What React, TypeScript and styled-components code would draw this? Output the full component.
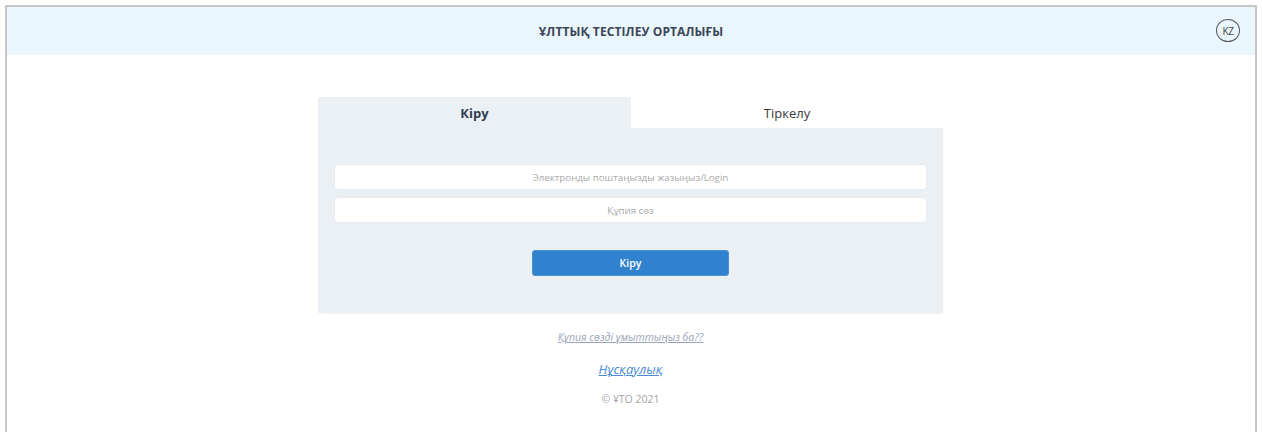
import React, { useState } from "react";
import styled, { createGlobalStyle } from "styled-components";

const GlobalStyle = createGlobalStyle`
  html, body {
    margin: 0;
    padding: 0;
    background: #ffffff;
    font-family: "Open Sans", "Noto Sans", sans-serif;
  }
  * {
    box-sizing: border-box;
  }
`;

const tabs = [
  { key: "login", label: "Кіру" },
  { key: "register", label: "Тіркелу" },
];

const App = () => {
  const [active, setActive] = useState<string>("login");

  return (
    <>
      <GlobalStyle />
      <Frame>
        <Header>
          <Title>ҰЛТТЫҚ ТЕСТІЛЕУ ОРТАЛЫҒЫ</Title>
          <LangBadge>KZ</LangBadge>
        </Header>

        <Main>
          <Card>
            <Tabs>
              {tabs.map((t) => (
                <Tab
                  key={t.key}
                  $active={active === t.key}
                  onClick={() => setActive(t.key)}
                >
                  {t.label}
                </Tab>
              ))}
            </Tabs>
            <Body>
              <Fields>
                <Input placeholder="Электронды поштаңызды жазыңыз/Login" />
                <Input type="password" placeholder="Құпия сөз" />
              </Fields>
              <SubmitButton>Кіру</SubmitButton>
            </Body>
          </Card>

          <Forgot href="#">Құпия сөзді ұмыттыңыз ба??</Forgot>
          <Guide href="#">Нұсқаулық</Guide>
          <Copy>© ҰТО 2021</Copy>
        </Main>
      </Frame>
    </>
  );
};

export default App;

const Frame = styled.div`
  margin: 5px 5px 0 5px;
  height: 427px;
  border: 2px solid #c6c6c6;
  border-bottom: none;
  display: flex;
  flex-direction: column;
`;

const Header = styled.header`
  position: relative;
  height: 48px;
  background: #eaf6fe;
  display: flex;
  align-items: center;
  justify-content: center;
`;

const Title = styled.h1`
  margin: 0;
  font-size: 12px;
  font-weight: 700;
  color: #3a4557;
  letter-spacing: 0.1px;
`;

const LangBadge = styled.div`
  position: absolute;
  right: 15px;
  top: 12px;
  width: 24px;
  height: 23px;
  border: 1.5px solid #555;
  border-radius: 50%;
  display: flex;
  align-items: center;
  justify-content: center;
  font-size: 10px;
  color: #444;
  letter-spacing: -0.5px;
`;

const Main = styled.main`
  display: flex;
  flex-direction: column;
  align-items: center;
  padding-top: 42px;
  padding-right: 1px;
`;

const Card = styled.div`
  width: 625px;
  display: flex;
  flex-direction: column;
`;

const Tabs = styled.div`
  display: grid;
  grid-template-columns: 313px 1fr;
`;

const Tab = styled.div<{ $active: boolean }>`
  height: 31px;
  display: flex;
  align-items: center;
  justify-content: center;
  font-size: 13px;
  cursor: pointer;
  border-radius: 3px 3px 0 0;
  font-weight: ${(p) => (p.$active ? 700 : 400)};
  color: ${(p) => (p.$active ? "#2f3d52" : "#3a3a3a")};
  background: ${(p) => (p.$active ? "#ebf0f5" : "#ffffff")};
`;

const Body = styled.div`
  background: #ebf0f5;
  border-radius: 0 0 3px 3px;
  box-shadow: 0 1px 2px rgba(0, 0, 0, 0.05);
  padding: 36px 16px 37px;
  display: flex;
  flex-direction: column;
  align-items: center;
  gap: 27px;
`;

const Fields = styled.div`
  width: 100%;
  display: flex;
  flex-direction: column;
  gap: 7px;
`;

const Input = styled.input`
  width: 100%;
  height: 26px;
  border: 1px solid #e6ebf0;
  border-radius: 4px;
  background: #ffffff;
  text-align: center;
  font-family: "Open Sans", "Noto Sans", sans-serif;
  font-size: 9.7px;
  color: #333;
  outline: none;

  &::placeholder {
    color: #a9a9a9;
  }
`;

const SubmitButton = styled.button`
  width: 197px;
  height: 26px;
  border: 1px solid #4a90d6;
  border-radius: 3px;
  background: #3182ce;
  color: #ffffff;
  font-family: "Open Sans", "Noto Sans", sans-serif;
  font-size: 10.5px;
  font-weight: 600;
  cursor: pointer;
`;

const Forgot = styled.a`
  margin-top: 17px;
  font-size: 10.5px;
  font-style: italic;
  color: #9aa4b6;
  text-decoration: underline;
`;

const Guide = styled.a`
  margin-top: 16px;
  font-size: 13px;
  font-style: italic;
  color: #4a8bd6;
  text-decoration: underline;
`;

const Copy = styled.div`
  margin-top: 14px;
  font-size: 10.5px;
  color: #a3a3a3;
`;
